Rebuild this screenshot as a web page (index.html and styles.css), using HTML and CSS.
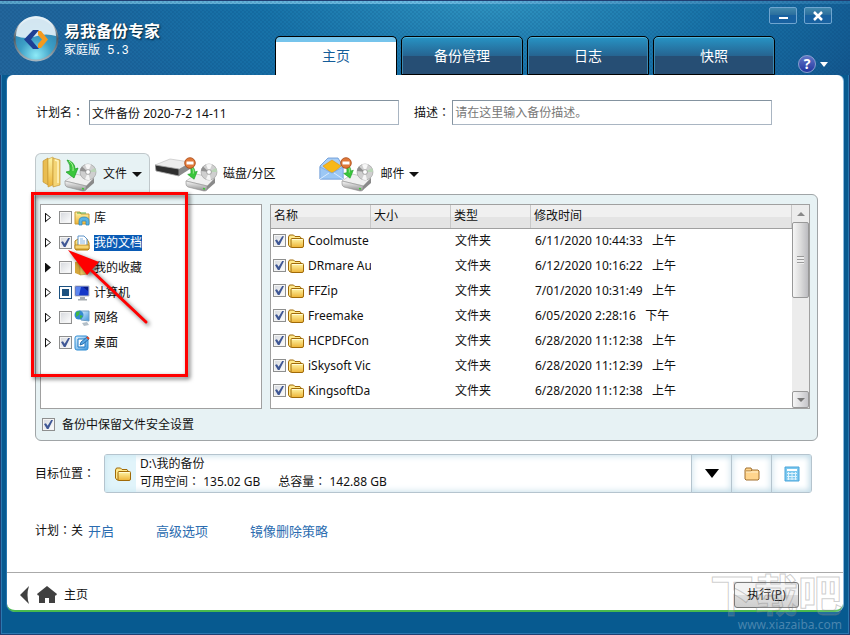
FILE: index.html
```html
<!DOCTYPE html>
<html lang="zh-CN">
<head>
	<meta charset="utf-8">
	<title>易我备份专家</title>
	<meta name="viewport" content="width=device-width">
	<link rel="stylesheet" href="styles.css">
</head>
<body>
	<!-- shared icons -->
	<svg class="sprite" aria-hidden="true">
		<defs>
			<linearGradient id="gold" x1="0" y1="0" x2="0" y2="1">
				<stop offset="0" stop-color="#fff6a8"/><stop offset="1" stop-color="#edb336"/>
			</linearGradient>
			<linearGradient id="metal" x1="0" y1="0" x2="0" y2="1">
				<stop offset="0" stop-color="#fafafa"/><stop offset="1" stop-color="#8d8d8d"/>
			</linearGradient>
			<linearGradient id="sky" x1="0" y1="0" x2="1" y2="1">
				<stop offset="0" stop-color="#e6f6ff"/><stop offset="1" stop-color="#3d94dc"/>
			</linearGradient>
		</defs>
		<symbol id="folder" viewBox="0 0 16 14">
			<path d="M.500 11V3l1-2h4l1.500 1.500H12l1 1.500v2l-9 7H2z" fill="#ffe98c" stroke="#a06a08"/>
			<path d="M4 4.500h10.500q1 0 1 1v6.500q0 1.500-1.500 1.500H4q-1 0-1-1v-7q0-1 1-1z" fill="url(#gold)" stroke="#a06a08"/>
			<path d="M4 5.500h10.500" stroke="#fffbd5"/>
		</symbol>
		<symbol id="drive" viewBox="0 0 34 36">
			<path d="M1 25l10-7 19 4-7 8z" fill="#f0f0f0" stroke="#b0b0b0" stroke-width=".6"/>
			<path d="M1 25l21 5v4q-1 1-3 1L3 31q-2-1-2-3z" fill="url(#metal)" stroke="#8a8a8a" stroke-width=".6"/>
			<path d="M22 30l8-8v5l-8 7z" fill="#8a8a8a"/>
			<circle cx="24" cy="16" r="8" fill="#cfcfcf" stroke="#999" stroke-width=".6"/>
			<path d="M24 16l-3-7.400a8 8 0 0 1 6 0z" fill="#f7f7f7"/>
			<path d="M24 16l7-4a8 8 0 0 1 1 4z" fill="#b9d4b6"/>
			<path d="M24 16l2 7.700a8 8 0 0 1-5-.4z" fill="#f5f5f5"/>
			<path d="M24 16l-8-1a8 8 0 0 1 2-4.500z" fill="#909090"/>
			<circle cx="24" cy="16" r="2.400" fill="#fff" stroke="#888" stroke-width=".7"/>
			<path d="M18 32.500l2 .4" stroke="#39c832" stroke-width="1.500"/>
		</symbol>
		<symbol id="arrow" viewBox="0 0 14 20">
			<path d="M2 1q8 2 8 9l3-1-4 10L1 13l4-1Q6 6 2 1z" fill="#3bc63c" stroke="#189b22" stroke-width=".7"/>
			<path d="M4 2q5 3 4 10" fill="none" stroke="#aef09c"/>
		</symbol>
		<symbol id="stop" viewBox="0 0 12 12">
			<circle cx="6" cy="6" r="5.300" fill="#e0793a" stroke="#a9440c" stroke-width=".8"/>
			<path d="M2.500 4.500h7v3h-7z" fill="#fff"/>
		</symbol>
	</svg>

	<header class="titlebar">
		<div class="brand">
			<svg class="logo" viewBox="0 0 46 46">
				<defs>
					<linearGradient id="ring" x1="0" y1="0" x2="0" y2="1">
						<stop offset="0" stop-color="#e6f1f6"/><stop offset=".5" stop-color="#4f5a62"/><stop offset="1" stop-color="#a8bac4"/>
					</linearGradient>
					<radialGradient id="ball" cx=".5" cy=".9" r=".8">
						<stop offset="0" stop-color="#8eeaf7"/><stop offset=".5" stop-color="#3d9fc6"/><stop offset="1" stop-color="#2b7fae"/>
					</radialGradient>
				</defs>
				<circle cx="23" cy="23" r="22.500" fill="url(#ring)"/>
				<circle cx="23" cy="23" r="20.500" fill="url(#ball)"/>
				<path d="M3 20a20 20 0 0 1 40 0q-10-3-19 0-11 4-21 0z" fill="#e5f2f8" opacity=".9"/>
				<path d="M20 14h6l-8 9.500 8 9.500h-6l-9-9.500z" fill="#1d3f94"/>
				<path d="M25 15h3l7 8.500-7 8.500h-3v-4l4-4.500-4-4.500z" fill="#f39a1e"/>
			</svg>
			<div>
				<h1>易我备份专家</h1>
				<p class="edition">家庭版 5.3</p>
			</div>
		</div>
		<nav class="tabs">
			<a class="tab active" href="#home">主页</a>
			<a class="tab" href="#manage">备份管理</a>
			<a class="tab" href="#log">日志</a>
			<a class="tab" href="#snapshot">快照</a>
		</nav>
		<div class="controls">
			<div class="window-buttons">
				<button class="window-button" aria-label="最小化"><svg viewBox="0 0 26 15"><path d="M9 10h9" stroke="#fff" stroke-width="2"/></svg></button>
				<button class="window-button" aria-label="关闭"><svg viewBox="0 0 26 15"><path d="M9 4l8 8M17 4l-8 8" stroke="#fff" stroke-width="2.500"/></svg></button>
			</div>
			<button class="help" aria-label="帮助"><span class="help-mark">?</span><span class="caret light"></span></button>
		</div>
	</header>

	<main class="panel">
		<form class="content">
			<div class="names">
				<label for="planName">计划名<span class="colon">：</span></label>
				<input class="text-input plan-name" id="planName" type="text" value="文件备份 2020-7-2 14-11">
				<label for="planNote">描述<span class="colon">：</span></label>
				<input class="text-input plan-note" id="planNote" type="text" placeholder="请在这里输入备份描述。">
			</div>

			<div class="sources">
				<button type="button" class="source selected">
					<svg class="source-icon" viewBox="0 0 56 36">
						<path d="M1 5l5-3v27l-5-3z" fill="#e9bd51" stroke="#bd8b28" stroke-width=".6"/>
						<path d="M6 3l5-2v28l-5 2z" fill="url(#gold)" stroke="#c89a38" stroke-width=".6"/>
						<path d="M11 2l7 2v25l-7 2z" fill="#f4d576" stroke="#bd8b28" stroke-width=".6"/>
						<path d="M13 4l3 1v22" fill="none" stroke="#fff4bf" stroke-width="1.500"/>
						<use href="#drive" x="22" width="34" height="36"/>
						<use href="#arrow" x="23" y="3" width="14" height="20"/>
					</svg>
					文件 <span class="caret"></span>
				</button>
				<button type="button" class="source disk">
					<svg class="source-icon wide" viewBox="0 0 66 36">
						<path d="M0 9L15 3l20 3-11 8z" fill="#ededed" stroke="#bbb" stroke-width=".6"/>
						<path d="M0 9l24 4v7L1 15z" fill="#2f2f2f" stroke="#aaa" stroke-width=".8"/>
						<path d="M24 13l11-6v6l-11 7z" fill="#8b8b8b"/>
						<use href="#drive" x="30" width="34" height="36"/>
						<use href="#arrow" x="31" y="8" width="13" height="16"/>
						<use href="#stop" x="29" y="1" width="12" height="12"/>
					</svg>
					磁盘/分区
				</button>
				<button type="button" class="source mail">
					<svg class="source-icon" viewBox="0 0 56 36">
						<path d="M1 10L9 2h10l5 8v13H1z" fill="#a8cef7" stroke="#5f92d2" stroke-width=".8"/>
						<path d="M4 10l9-6 9 6-9 8z" fill="#f8b819" stroke="#e18f10" stroke-width=".6"/>
						<path d="M1 11l12 6 11-6v12H1z" fill="#9cc7f4" stroke="#6b9cdb" stroke-width=".6"/>
						<path d="M1 23l9-6m14 6l-9-6" stroke="#d8eaff"/>
						<use href="#drive" x="22" width="34" height="36"/>
						<use href="#arrow" x="23" y="7" width="13" height="16"/>
						<use href="#stop" x="21" y="1" width="12" height="12"/>
					</svg>
					邮件 <span class="caret"></span>
				</button>
			</div>

			<section class="picker">
				<div class="panes">
					<div class="tree-pane">
						<ul class="tree">
							<li>
								<button type="button" class="expander" aria-label="展开"></button>
								<input type="checkbox" id="library">
								<label for="library">
									<svg class="icon" viewBox="0 0 16 16"><path d="M1 14V2h5l1 2h8v10z" fill="url(#gold)" stroke="#c99b36"/><path d="M3 3h9" stroke="#57a848"/><path d="M5 15v-4q0-4 5-4t5 4v4h-3v-4H8v4z" fill="#5ab4e4" stroke="#2782bc" stroke-width=".7"/></svg>
									<span>库</span>
								</label>
							</li>
							<li>
								<button type="button" class="expander" aria-label="展开"></button>
								<input type="checkbox" id="documents" checked>
								<label for="documents">
									<svg class="icon" viewBox="0 0 16 16"><path d="M1 6l3-2h9l2 4v6l-1 1H2l-1-2z" fill="url(#gold)" stroke="#b37f15"/><path d="M4 1h6l3 3v7H4z" fill="#fff" stroke="#5e94c9"/><path d="M6 4h3M6 6h5M6 8h5" stroke="#85b4e2"/><path d="M1 10h14v4H1z" fill="#f6d370" stroke="#b37f15" stroke-width=".7"/></svg>
									<span class="picked">我的文档</span>
								</label>
							</li>
							<li>
								<button type="button" class="expander filled" aria-label="展开"></button>
								<input type="checkbox" id="favorites">
								<label for="favorites">
									<svg class="icon" viewBox="0 0 16 16"><path d="M1 2l5-1v14l-5-2z" fill="#d5a63b"/><path d="M6 1l8 1v12l-8 1z" fill="#eac65f" stroke="#b68b2d" stroke-width=".6"/></svg>
									<span>我的收藏</span>
								</label>
							</li>
							<li>
								<button type="button" class="expander" aria-label="展开"></button>
								<input type="checkbox" class="partial" id="computer">
								<label for="computer">
									<svg class="icon" viewBox="0 0 16 16"><path d="M1 1h14v10H1z" fill="#1638c8" stroke="#b9bdc2"/><path d="M2 2h5l-2 8H2z" fill="#5c86ef"/><path d="M9 2h5v4z" fill="#0a1d85"/><path d="M6 12h5v2h2v1.500H4V14h2z" fill="#a6abb0"/></svg>
									<span>计算机</span>
								</label>
							</li>
							<li>
								<button type="button" class="expander" aria-label="展开"></button>
								<input type="checkbox" id="network">
								<label for="network">
									<svg class="icon" viewBox="0 0 16 16"><path d="M5 1h10v10L7 10z" fill="url(#sky)" stroke="#6e9fc6"/><path d="M8 13l5-1 2 3-5 1z" fill="#b4bfc8"/><circle cx="5" cy="5" r="4.500" fill="#358ad0"/><path d="M2 2l4-1-1 4-3 2zM6 5l3 1-3 3z" fill="#3fb747"/></svg>
									<span>网络</span>
								</label>
							</li>
							<li>
								<button type="button" class="expander" aria-label="展开"></button>
								<input type="checkbox" id="desktop" checked>
								<label for="desktop">
									<svg class="icon" viewBox="0 0 16 16"><rect x="1" y="1" width="13" height="14" rx="2" fill="url(#sky)" stroke="#2d8bd2"/><path d="M4 4h7v8H4z" fill="#fff" stroke="#1e78c3"/><path d="M6 10l1-3 6-5 2 2-6 5z" fill="#57a6e2" stroke="#155da2" stroke-width=".8"/><path d="M13 2l2 2" stroke="#e04624" stroke-width="2"/></svg>
									<span>桌面</span>
								</label>
							</li>
						</ul>
						<!-- highlight over the source tree -->
						<svg class="callout" viewBox="0 0 164 192" aria-hidden="true">
							<rect x="2.500" y="2.500" width="154" height="182" fill="none" stroke="#f00" stroke-width="3"/>
							<path d="M116 131L62 80" stroke="#f00" stroke-width="3" stroke-linecap="round"/>
							<path d="M38 59L69 71 57 84z" fill="#f00"/>
						</svg>
					</div>

					<div class="file-pane">
						<table class="files">
							<colgroup><col class="col-name"><col class="col-size"><col class="col-type"><col></colgroup>
							<thead>
								<tr><th>名称</th><th>大小</th><th>类型</th><th>修改时间</th></tr>
							</thead>
							<tbody>
								<tr>
									<td><label><input type="checkbox" checked><svg class="folder"><use href="#folder"/></svg>Coolmuste</label></td>
									<td></td><td>文件夹</td><td>6/11/2020 10:44:33&nbsp;&nbsp; 上午</td>
								</tr>
								<tr>
									<td><label><input type="checkbox" checked><svg class="folder"><use href="#folder"/></svg>DRmare Au</label></td>
									<td></td><td>文件夹</td><td>6/12/2020 10:16:22&nbsp;&nbsp; 上午</td>
								</tr>
								<tr>
									<td><label><input type="checkbox" checked><svg class="folder"><use href="#folder"/></svg>FFZip</label></td>
									<td></td><td>文件夹</td><td>7/01/2020 10:31:49&nbsp;&nbsp; 上午</td>
								</tr>
								<tr>
									<td><label><input type="checkbox" checked><svg class="folder"><use href="#folder"/></svg>Freemake</label></td>
									<td></td><td>文件夹</td><td>6/05/2020 2:28:16&nbsp;&nbsp; 下午</td>
								</tr>
								<tr>
									<td><label><input type="checkbox" checked><svg class="folder"><use href="#folder"/></svg>HCPDFCon</label></td>
									<td></td><td>文件夹</td><td>6/28/2020 11:12:38&nbsp;&nbsp; 上午</td>
								</tr>
								<tr>
									<td><label><input type="checkbox" checked><svg class="folder"><use href="#folder"/></svg>iSkysoft Vic</label></td>
									<td></td><td>文件夹</td><td>6/28/2020 11:12:39&nbsp;&nbsp; 上午</td>
								</tr>
								<tr>
									<td><label><input type="checkbox" checked><svg class="folder"><use href="#folder"/></svg>KingsoftDa</label></td>
									<td></td><td>文件夹</td><td>6/28/2020 11:12:38&nbsp;&nbsp; 上午</td>
								</tr>
							</tbody>
						</table>
						<div class="scrollbar">
							<button type="button" class="scroll-up" aria-label="向上"><span class="caret up"></span></button>
							<div class="thumb"><span class="grip"></span></div>
							<button type="button" class="scroll-down" aria-label="向下"><span class="caret small"></span></button>
						</div>
					</div>
				</div>
				<label class="security"><input type="checkbox" checked>备份中保留文件安全设置</label>
			</section>

			<div class="target">
				<span class="target-label">目标位置<span class="colon">：</span></span>
				<div class="target-box">
					<div class="target-icon"><svg class="folder"><use href="#folder"/></svg></div>
					<div class="target-info">
						<p>D:\我的备份</p>
						<p class="space"><span>可用空间<span class="colon">：</span> 135.02 GB</span><span>总容量<span class="colon">：</span> 142.88 GB</span></p>
					</div>
					<button type="button" aria-label="选择位置"><span class="caret big"></span></button>
					<button type="button" aria-label="浏览">
						<svg class="icon" viewBox="0 0 16 16"><path d="M1 13V4l1-2h5l1 2h6l1 1v8l-1 1H2z" fill="#ffd58d" stroke="#a17030"/><path d="M2 5h5l1-1" fill="none" stroke="#a17030"/><path d="M2 6h12" stroke="#fff0cd"/></svg>
					</button>
					<button type="button" aria-label="网络位置">
						<svg class="icon" viewBox="0 0 16 16"><path d="M1 1h14v14H1z" fill="#7cc8ee" stroke="#4aa5db"/><path d="M3 3h10v2H3z" fill="#fff"/><path d="M3 7.500h10M3 10.500h10M3 13h10M4.500 6v8M8 6v8M11.500 6v8" stroke="#dff3fd"/></svg>
					</button>
				</div>
			</div>

			<div class="schedule">
				<span>计划<span class="colon">：</span>关</span>
				<a href="#enable">开启</a>
				<a href="#advanced">高级选项</a>
				<a href="#policy">镜像删除策略</a>
			</div>
		</form>

		<footer class="actions">
			<a class="crumb" href="#home">
				<svg class="back" viewBox="0 0 10 18"><path d="M9 0Q6 9 9 18L0 9z" fill="#404040"/></svg>
				<svg class="house" viewBox="0 0 20 18"><path d="M10 0l10 8-1 1.500h-1V17h-6v-5H8v5H2V9.500H1L0 8z" fill="#404040"/></svg>
				主页
			</a>
			<button class="run">执行(<u>P</u>)</button>
		</footer>
	</main>

	<div class="watermark" aria-hidden="true">
		<div class="watermark-name">下载吧</div>
		<div class="watermark-site">www.xiazaiba.com</div>
	</div>
</body>
</html>
```
FILE: styles.css
```css
* {
	box-sizing: border-box;
}

body {
	display: flex;
	flex-direction: column;
	min-height: 100vh;
	margin: 0;
	padding: 0 7px 23px;
	background-color: #075a90;
	box-shadow: inset 0 0 0 1px #203f73, inset 0 0 0 2px #2a78b0;
	color: #111;
	font-family: "Noto Sans", "Noto Sans CJK SC", sans-serif;
	font-size: 12px;
	line-height: 18px;
	position: relative;
}

button,
input {
	font: inherit;
	color: inherit;
}

button {
	cursor: pointer;
	padding: 0;
	border: none;
	background: none;
}

p,
h1 {
	margin: 0;
}

.sprite {
	position: absolute;
	width: 0;
	height: 0;
}

/* the TC face centres the colon in its box */
.colon {
	font-family: "Noto Sans CJK TC", sans-serif;
	font-feature-settings: "locl" 0;
	line-height: 1;
}

/* title bar */
.titlebar {
	display: flex;
	height: 75px;
	margin: 0 -7px;
	padding: 0 18px 0 13px;
	border-top: 1px solid #203f73;
	background:
		repeating-conic-gradient(rgba(0, 50, 100, 0.12) 0 25%, transparent 0 50%) 0 0 / 4px 4px,
		linear-gradient(90deg, #5aa5cb, #6bbce3 50%, #2473a8) 0 0 / 100% 3px no-repeat,
		radial-gradient(ellipse 420px 130px at 58% 0, #3094c1, rgba(24, 120, 173, 0.7) 55%, transparent),
		linear-gradient(90deg, #23669c, #1567a0 30%, #17659b 80%, #13578e);
}

.brand {
	display: flex;
	flex: 0 0 262px;
	gap: 5px;
	padding-top: 15px;
	color: #fff;
}

.logo {
	width: 46px;
	height: 46px;
}

h1 {
	margin-top: 4px;
	font-size: 16px;
	line-height: 22px;
	text-shadow: 1px 1px 2px #023;
}

.edition {
	font-family: "Liberation Mono", "Noto Sans CJK SC", monospace;
}

.tabs {
	display: flex;
	align-items: flex-end;
	gap: 4px;
}

.tab {
	width: 122px;
	height: 39px;
	border: 1px solid #000;
	border-radius: 5px 5px 0 0;
	background: linear-gradient(#2794c5, #266592 50%, #264e74 51%);
	box-shadow: inset 0 1px #4eb3dc, inset 1px 0 #3b88b0, inset -1px 0 #3b88b0;
	color: #fff;
	font-size: 14px;
	line-height: 38px;
	text-align: center;
	text-decoration: none;
}

.tab.active {
	border-bottom: none;
	background: linear-gradient(#76c4ec 5px, #fff 5px);
	box-shadow: none;
	color: #145d99;
}

.controls {
	display: flex;
	flex: 1;
	flex-direction: column;
	align-items: flex-end;
	justify-content: space-between;
	min-width: 0;
	padding: 6px 0 2px;
}

.window-buttons {
	display: flex;
	gap: 7px;
}

.window-button {
	width: 28px;
	height: 17px;
	border: 1px solid #6fa5d0;
	border-radius: 2px;
	background: linear-gradient(#4389ae, #2a6e9d 45%, #1861a0 50%);
}

.window-button svg {
	display: block;
	width: 26px;
	height: 15px;
	fill: none;
}

.help {
	display: flex;
	align-items: center;
	gap: 4px;
	padding-right: 4px;
}

.help-mark {
	width: 18px;
	height: 18px;
	border: 1px solid #8b9fd0;
	border-radius: 50%;
	background: linear-gradient(#6076c7, #2336a0);
	color: #fff;
	font-size: 14px;
	font-weight: bold;
	line-height: 16px;
}

.caret {
	display: inline-block;
	border: 4px solid transparent;
	border-top: 5px solid #111;
	border-bottom: none;
}

.caret.light {
	border-top-color: #fff;
}

.caret.big {
	border-width: 9px 7px 0;
	border-top-color: #000;
}

.caret.small {
	border-top: 4px solid #777;
}

.caret.up {
	border-top: none;
	border-bottom: 4px solid #888;
}

/* main panel */
.panel {
	display: flex;
	flex: 1;
	flex-direction: column;
	border-bottom: 2px solid #48b94d;
	border-radius: 6px 6px 8px 8px;
	background-color: #fff;
	box-shadow: 1px 0 #8ab8dd, -1px 0 #2775ad;
}

.content {
	flex: 1;
	padding: 25px 25px 0 28px;
}

.names {
	display: flex;
	align-items: center;
	margin-right: 46px;
	padding-left: 1px;
}

.text-input {
	min-width: 0;
	height: 25px;
	padding: 0 2px;
	border: 1px solid #a9b5c2;
	border-top-color: #8493a0;
	border-left-color: #8493a0;
	background-color: #fff;
}

.text-input::placeholder {
	color: #777;
}

.plan-name {
	flex: 31;
	margin: 0 15px 0 5px;
}

.plan-note {
	flex: 32;
	margin-left: 2px;
}

/* backup sources */
.sources {
	display: flex;
	height: 41px;
	margin-top: 28px;
}

.source {
	display: flex;
	align-items: center;
	gap: 5px;
	padding: 0 6px;
	border: 1px solid transparent;
	border-bottom: none;
	white-space: nowrap;
}

.source.selected {
	width: 115px;
	border-color: #c0c8cb;
	border-radius: 6px 6px 0 0;
	background-color: #e7f2f4;
}

.source.disk {
	padding-left: 4px;
}

.source.mail {
	margin-left: 30px;
}

.source .caret {
	border-width: 5px 5px 0;
}

.source-icon {
	width: 56px;
	height: 36px;
}

.source-icon.wide {
	width: 66px;
	margin-right: -3px;
}

.picker {
	padding: 9px 7px 0 4px;
	border: 1px solid #a0a5a7;
	border-radius: 0 6px 6px 6px;
	background-color: #e7f2f4;
}

.panes {
	display: flex;
	gap: 8px;
	height: 205px;
}

.tree-pane,
.file-pane {
	border: 1px solid #a0a0a0;
	background-color: #fff;
}

.tree-pane {
	flex: 0 0 222px;
	position: relative;
}

.tree {
	margin: 0;
	padding: 0 4px;
	list-style: none;
}

.tree li {
	display: flex;
	align-items: center;
	height: 25px;
}

.tree label {
	display: flex;
	align-items: center;
	gap: 4px;
	margin-left: 2px;
}

.tree label span {
	line-height: 16px;
}

.tree .picked {
	background-color: #0a5bb5;
	color: #fff;
}

.expander {
	width: 6px;
	height: 10px;
	margin-right: 8px;
	background-color: #111;
	clip-path: polygon(0 0, 100% 50%, 0 100%);
}

.expander::before {
	content: "";
	display: block;
	width: 6px;
	height: 10px;
	background-color: #fff;
	clip-path: polygon(1px 2px, 5px 5px, 1px 8px);
}

.expander.filled::before {
	display: none;
}

input[type="checkbox"] {
	appearance: none;
	flex: none;
	width: 13px;
	height: 13px;
	margin: 0;
	border: 1px solid #8e8f8f;
	background: linear-gradient(135deg, #d4d7dc, #fff);
	box-shadow: inset 0 0 0 1px #f4f4f4;
}

input[type="checkbox"]:checked::after {
	content: "";
	display: block;
	width: 9px;
	height: 9px;
	margin: 1px;
	background-color: #3f5795;
	clip-path: polygon(0 45%, 22% 35%, 40% 65%, 80% 0, 100% 0, 50% 100%, 32% 100%);
}

input[type="checkbox"].partial {
	border-color: #1c5180;
	background: #1c5180;
	box-shadow: inset 0 0 0 2px #fff;
}

.icon {
	width: 16px;
	height: 16px;
}

.callout {
	position: absolute;
	z-index: 2;
	top: -14px;
	left: -11px;
	width: 164px;
	height: 192px;
	filter: drop-shadow(2px 2px 2px rgba(0, 0, 0, 0.6));
	pointer-events: none;
}

/* file list */
.file-pane {
	display: flex;
	flex: 1;
	overflow: hidden;
}

.files {
	flex: 1;
	align-self: flex-start;
	border-collapse: collapse;
	table-layout: fixed;
	width: 100%;
}

.col-name {
	width: 100px;
}

.col-size,
.col-type {
	width: 80px;
}

.files th {
	height: 23px;
	padding: 0 3px;
	border-bottom: 1px solid #a0a0a0;
	background: linear-gradient(90deg, transparent calc(100% - 1px), #c8c8c8 0), linear-gradient(#f0f0f0 50%, #e4e4e4 50%);
	font-weight: normal;
	text-align: left;
}

.files td {
	height: 25px;
	padding: 0 4px;
	overflow: hidden;
	white-space: nowrap;
}

.files td:first-child {
	padding: 0 0 0 2px;
}

.files label {
	display: flex;
	align-items: center;
}

.folder {
	flex: none;
	width: 16px;
	height: 14px;
}

.files .folder {
	margin: 0 4px 0 2px;
}

.scrollbar {
	display: flex;
	flex: 0 0 17px;
	flex-direction: column;
	background-color: #ececec;
}

.scrollbar button {
	display: grid;
	place-items: center;
	height: 17px;
}

.thumb {
	display: grid;
	place-items: center;
	height: 76px;
	border: 1px solid #989898;
	border-radius: 2px;
	background: linear-gradient(90deg, #f6f6f6, #dcdcdc 50%, #bcbcc0);
}

.grip {
	width: 7px;
	height: 8px;
	background: repeating-linear-gradient(#999 0 1px, #eee 1px 3px);
}

.scrollbar .scroll-down {
	margin-top: auto;
	border: 1px solid #989898;
	border-radius: 2px;
	background: linear-gradient(90deg, #f6f6f6, #c6c6ca);
}

.security {
	display: flex;
	align-items: center;
	gap: 7px;
	height: 31px;
	padding-left: 2px;
}

/* destination */
.target {
	display: flex;
	align-items: center;
	margin: 13px 6px 0 0;
}

.target-label {
	flex: 0 0 69px;
}

.target-box {
	display: flex;
	flex: 1;
	height: 39px;
	border: 1px solid #b5c4ce;
	border-radius: 3px;
	box-shadow: inset 0 0 7px #bcd8e5;
}

.target-icon {
	display: grid;
	place-items: center;
	width: 31px;
	padding-left: 4px;
	background-color: rgba(205, 237, 246, 0.6);
}

.target-info {
	flex: 1;
	padding-left: 4px;
}

.space {
	display: flex;
	gap: 18px;
}

.target-box button {
	width: 40px;
	border-left: 1px solid #b5c4ce;
	box-shadow: inset 0 0 7px #c7dfea;
	display: grid;
	place-items: center;
}

.schedule {
	display: flex;
	align-items: center;
	margin-top: 29px;
}

.schedule a {
	margin-right: 42px;
	color: #2b6cb0;
	font-size: 13px;
	text-decoration: none;
}

.schedule > span {
	margin-right: 5px;
}

.actions {
	display: flex;
	align-items: center;
	justify-content: space-between;
	height: 38px;
	padding: 6px 44px 0 13px;
	border-top: 1px solid #aaa;
}

.crumb {
	display: flex;
	align-items: center;
	gap: 7px;
	color: #111;
	text-decoration: none;
}

.back {
	width: 10px;
	height: 18px;
}

.house {
	width: 20px;
	height: 18px;
}

.run {
	width: 65px;
	height: 26px;
	border: 1px solid #777;
	border-radius: 3px;
	background: linear-gradient(#f3f3f3 50%, #dcdcdc 50%, #cfcfcf);
}

/* site mark in the corner */
.watermark {
	position: absolute;
	right: 8px;
	bottom: 3px;
	pointer-events: none;
	text-align: right;
}

.watermark-name {
	color: rgba(255, 255, 255, 0.12);
	font-size: 44px;
	font-weight: bold;
	line-height: 44px;
	-webkit-text-stroke: 1px rgba(130, 130, 130, 0.4);
}

.watermark-site {
	color: rgba(130, 170, 200, 0.55);
	font-size: 12px;
	line-height: 15px;
}
```
